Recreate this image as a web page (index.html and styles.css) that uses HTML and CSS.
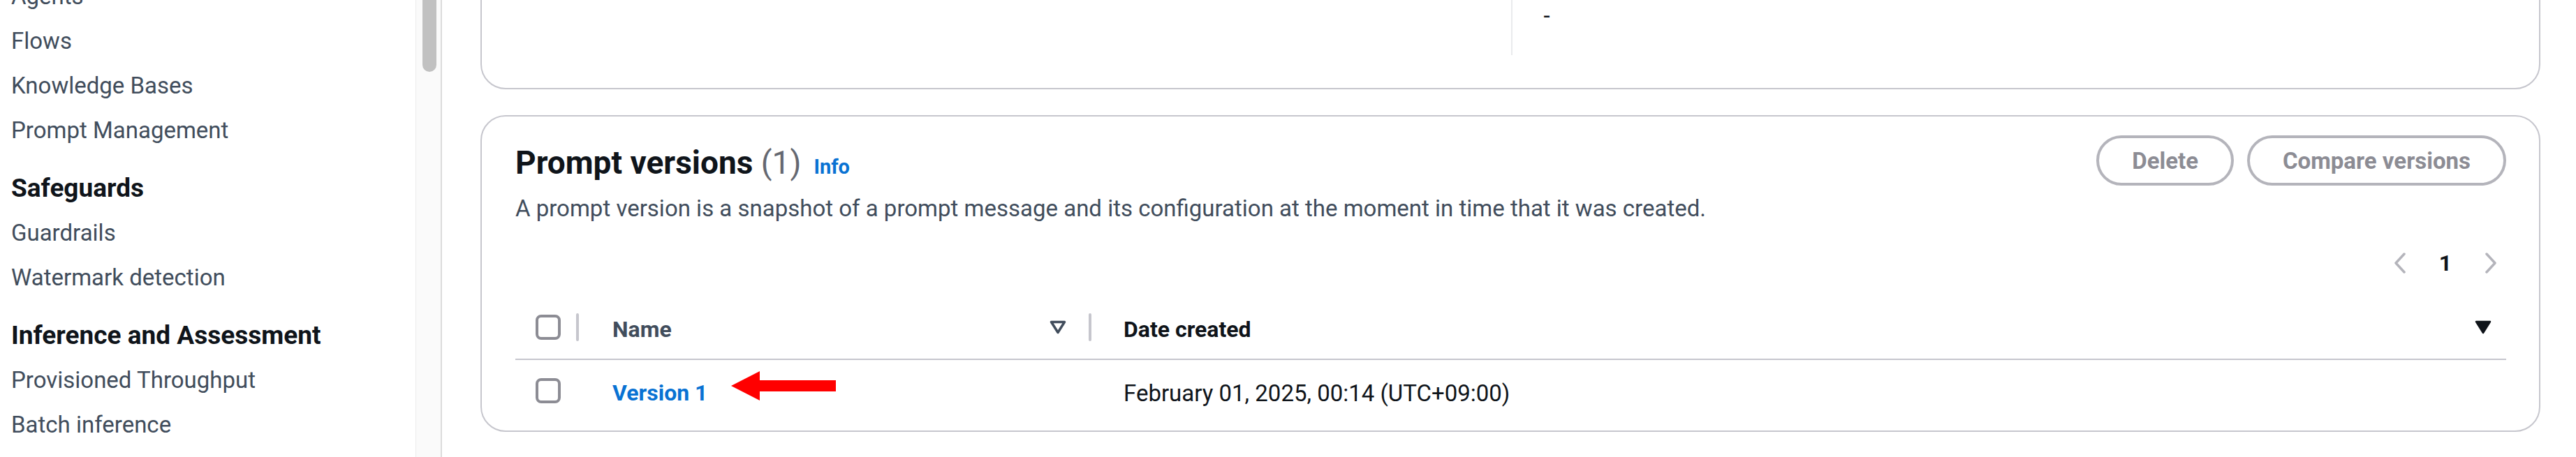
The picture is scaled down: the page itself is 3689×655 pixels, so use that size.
FILE: index.html
```html
<!DOCTYPE html>
<html lang="en">
<head>
<meta charset="utf-8">
<title>Prompt versions</title>
<link rel="stylesheet" href="styles.css">
</head>
<body>
<div class="layout">
  <nav class="sidenav">
    <ul class="nav-list">
      <li class="nav-item">Agents</li>
      <li class="nav-item">Flows</li>
      <li class="nav-item">Knowledge Bases</li>
      <li class="nav-item">Prompt Management</li>
    </ul>
    <h3 class="nav-heading">Safeguards</h3>
    <ul class="nav-list">
      <li class="nav-item">Guardrails</li>
      <li class="nav-item">Watermark detection</li>
    </ul>
    <h3 class="nav-heading">Inference and Assessment</h3>
    <ul class="nav-list">
      <li class="nav-item">Provisioned Throughput</li>
      <li class="nav-item">Batch inference</li>
    </ul>
  </nav>
  <div class="scrollbar"><div class="scrollbar-thumb"></div></div>
  <main class="content">
    <section class="card card-details">
      <div class="kv-grid">
        <div class="kv-col"></div>
        <div class="kv-col kv-col-sep"><div class="kv-value">-</div></div>
      </div>
    </section>
    <section class="card card-versions">
      <header class="card-header">
        <div class="title-line">
          <h2 class="card-title">Prompt versions <span class="count">(1)</span></h2>
          <a class="info-link">Info</a>
        </div>
        <div class="actions">
          <button class="btn" disabled>Delete</button>
          <button class="btn" disabled>Compare versions</button>
        </div>
      </header>
      <p class="card-desc">A prompt version is a snapshot of a prompt message and its configuration at the moment in time that it was created.</p>
      <div class="pagination">
        <svg class="chev" width="20" height="30" viewBox="0 0 20 30"><polyline points="16,2 4,15 16,28" fill="none" stroke="#b4b4bb" stroke-width="3.5" stroke-linecap="round" stroke-linejoin="round"/></svg>
        <span class="page-num">1</span>
        <svg class="chev" width="20" height="30" viewBox="0 0 20 30"><polyline points="4,2 16,15 4,28" fill="none" stroke="#b4b4bb" stroke-width="3.5" stroke-linecap="round" stroke-linejoin="round"/></svg>
      </div>
      <div class="table">
        <div class="trow thead">
          <div class="cell cell-select"><span class="checkbox"></span><span class="col-sep col-sep-end"></span></div>
          <div class="cell cell-name"><span class="th-label">Name</span><svg class="sort-icon" width="24" height="20" viewBox="0 0 24 20"><polygon points="2.5,2.5 21.5,2.5 12,17.5" fill="none" stroke="#414d5c" stroke-width="3.5" stroke-linejoin="round"/></svg><span class="col-sep"></span></div>
          <div class="cell cell-date"><span class="th-label th-active">Date created</span><svg class="sort-icon sort-active" width="24" height="20" viewBox="0 0 24 20"><polygon points="2,2 22,2 12,18" fill="#0f141a" stroke="#0f141a" stroke-width="2.5" stroke-linejoin="round"/></svg></div>
        </div>
        <div class="trow tbody">
          <div class="cell cell-select"><span class="checkbox"></span></div>
          <div class="cell cell-name"><a class="row-link">Version 1</a><svg class="callout-arrow" width="150" height="42" viewBox="0 0 150 42"><polygon points="0,21 41,0 41,13 150,13 150,29 41,29 41,42" fill="#ff0000"/></svg></div>
          <div class="cell cell-date"><span class="td-text">February 01, 2025, 00:14 (UTC+09:00)</span></div>
        </div>
      </div>
    </section>
  </main>
</div>
</body>
</html>
```
FILE: styles.css
```css
* { box-sizing: border-box; margin: 0; padding: 0; }
html, body { margin: 0; }
body {
  width: 3689px;
  height: 655px;
  overflow: hidden;
  background: #ffffff;
  color: #0f141a;
  font-family: Roboto, "Liberation Sans", Arial, sans-serif;
}
.layout { display: flex; height: 655px; overflow: hidden; }

/* side navigation */
.sidenav { width: 595px; flex: none; padding-left: 16px; margin-top: -37px; }
.nav-list { list-style: none; }
.nav-item { font-size: 33px; line-height: 64px; color: #414d5c; white-space: nowrap; }
.nav-heading { font-size: 37px; line-height: 64px; font-weight: 700; color: #0f141a; margin-top: 19px; white-space: nowrap; }

.scrollbar {
  width: 38px; flex: none; height: 655px;
  background: #fafafa;
  border-left: 1px solid #ececec;
  border-right: 2px solid #dcdcdc;
  padding-left: 9px;
}
.scrollbar-thumb { width: 20px; height: 140px; margin-top: -37px; border-radius: 10px; background: #c1c1c1; }

/* main */
.content { flex: 1; min-width: 0; padding: 0 51px 0 55px; }
.card { border: 2px solid #c6c6cd; border-radius: 36px; background: #fff; }

.card-details { margin-top: -100px; padding: 0 47px 47px 48px; }
.kv-grid { display: grid; grid-template-columns: 1fr 1fr; height: 177px; }
.kv-col { display: flex; flex-direction: column; justify-content: flex-end; }
.kv-col-sep { border-left: 2px solid #e9ebed; padding-left: 45px; }
.kv-value { font-size: 33px; line-height: 44px; margin-bottom: 34px; color: #0f141a; }

.card-versions { margin-top: 37px; padding: 27px 47px 13px 48px; }
.card-header { display: flex; justify-content: space-between; align-items: center; height: 72px; }
.title-line { display: flex; align-items: baseline; padding-top: 6px; }
.card-title { font-size: 46px; line-height: 52px; font-weight: 700; color: #0f141a; white-space: nowrap; }
.count { font-weight: 400; color: #656871; }
.info-link { font-size: 29px; font-weight: 700; color: #0972d3; margin-left: 18px; }
.actions { display: flex; gap: 19px; }
.btn {
  height: 72px; padding: 0 47px;
  border: 4px solid #b4b4bb; border-radius: 36px;
  background: #fff; color: #8c8c94;
  font-family: inherit; font-size: 33px; font-weight: 700;
}
.card-desc { margin-top: 11px; font-size: 33px; line-height: 44px; color: #414d5c; white-space: nowrap; }

.pagination { display: flex; justify-content: flex-end; align-items: center; gap: 46px; height: 66px; margin-top: 23px; padding-right: 12px; }
.page-num { font-size: 32px; font-weight: 700; color: #0f141a; }

.table { margin-top: 14px; }
.trow { display: grid; grid-template-columns: 91px 734px 1fr; }
.thead { height: 92px; border-bottom: 2px solid #c6c6cd; }
.tbody { height: 88px; }
.cell { display: flex; align-items: center; }
.cell-select { padding-left: 29px; }
.cell-name { padding-left: 48px; }
.cell-date { padding-left: 46px; padding-right: 21px; }
.checkbox { width: 36px; height: 36px; border: 4px solid #8c8c94; border-radius: 8px; background: #fff; flex: none; }
.col-sep { width: 4px; height: 40px; border-radius: 2px; background: #c6c6cd; flex: none; }
.col-sep-end { margin-left: auto; }
.th-label { font-size: 32px; font-weight: 700; color: #414d5c; padding-top: 6px; }
.th-active { color: #0f141a; }
.sort-icon { margin-left: auto; flex: none; }
.cell-name .sort-icon { margin-right: 32px; }
.row-link { font-size: 32px; font-weight: 700; color: #0972d3; padding-top: 6px; }
.callout-arrow { margin-left: 34px; margin-bottom: 14px; flex: none; }
.td-text { font-size: 33px; color: #0f141a; padding-top: 6px; }
```
